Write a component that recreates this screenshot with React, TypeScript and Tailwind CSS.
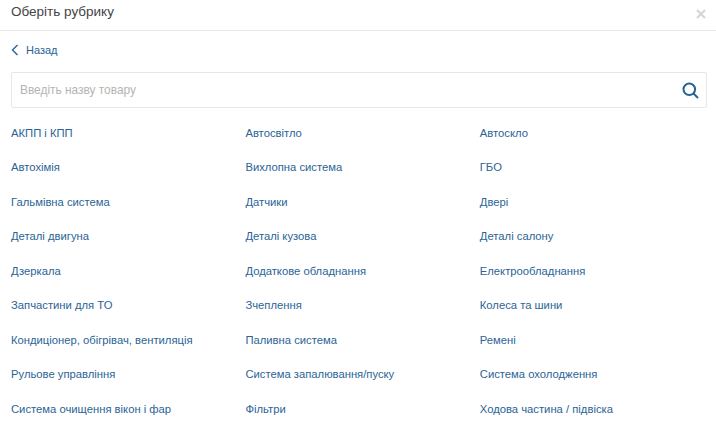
import React from 'react';

const items = [
  'АКПП і КПП', 'Автосвітло', 'Автоскло',
  'Автохімія', 'Вихлопна система', 'ГБО',
  'Гальмівна система', 'Датчики', 'Двері',
  'Деталі двигуна', 'Деталі кузова', 'Деталі салону',
  'Дзеркала', 'Додаткове обладнання', 'Електрообладнання',
  'Запчастини для ТО', 'Зчеплення', 'Колеса та шини',
  'Кондиціонер, обігрівач, вентиляція', 'Паливна система', 'Ремені',
  'Рульове управління', 'Система запалювання/пуску', 'Система охолодження',
  'Система очищення вікон і фар', 'Фільтри', 'Ходова частина / підвіска',
];

export default function App() {
  return (
    <div className="h-[427px] w-[716px] overflow-hidden bg-white font-['Liberation_Sans',Arial,sans-serif]">
      <div className="flex h-[31px] items-start justify-between border-b border-[#e6e6e6] px-[11px]">
        <span className="text-[13.5px] leading-[23px] text-[#444]">Оберіть рубрику</span>
        <svg className="mr-[-1px] mt-[9px]" width="10" height="10" viewBox="0 0 10 10" fill="none" stroke="#d4d4d4" strokeWidth="2"><path d="M1 1l8 8M9 1l-8 8" /></svg>
      </div>
      <div className="px-[11px]">
        <a className="mt-[12px] flex h-[14px] items-center gap-[7px] text-[11px] text-[#2a6496]">
          <svg width="8" height="12" viewBox="0 0 8 12" fill="none" stroke="#2a6496" strokeWidth="1.4"><path d="M6.5 1L1.5 6l5 5" /></svg>
          Назад
        </a>
        <div className="mt-[15px] flex h-[36px] w-[696px] items-center justify-between rounded-[2px] border border-[#e6e6e6] pl-[8px] pr-[7px]">
          <span className="pt-[1px] text-[11.9px] text-[#b4b4b4]">Введіть назву товару</span>
          <svg width="17" height="17" viewBox="0 0 17 17" fill="none" stroke="#266294" strokeWidth="2"><circle cx="7.3" cy="7.3" r="5.8" /><path d="M11.5 11.5l4.5 4.5" /></svg>
        </div>
        <div className="mt-[7.75px] grid grid-cols-[234.4px_234.4px_1fr]">
          {items.map((item) => (
            <a key={item} className="flex h-[34.5px] items-center text-[11.25px] text-[#2a6496]">{item}</a>
          ))}
        </div>
      </div>
    </div>
  );
}
